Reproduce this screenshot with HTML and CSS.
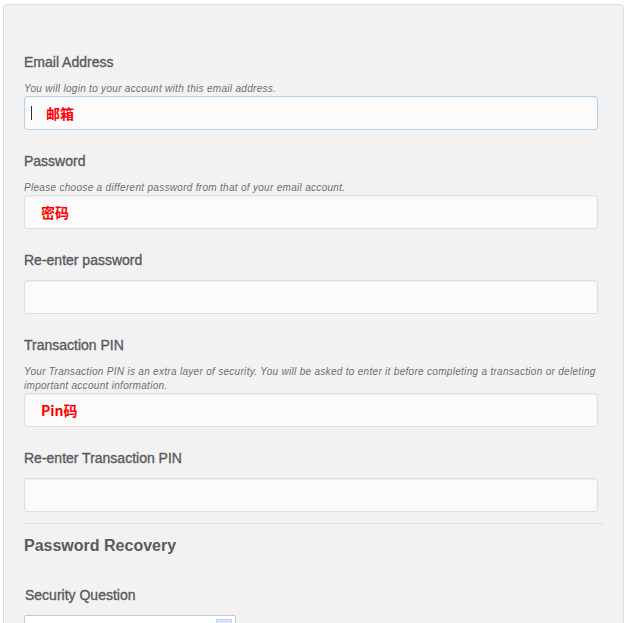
FILE: index.html
```html
<!DOCTYPE html>
<html>
<head>
<meta charset="utf-8">
<link rel="stylesheet" href="styles.css">
</head>
<body>
<div class="panel">
  <div class="group">
    <div class="label">Email Address</div>
    <div class="help">You will login to your account with this email address.</div>
    <div class="input focused"><span class="caret"></span><span class="note note-email">邮箱</span></div>
  </div>
  <div class="group">
    <div class="label">Password</div>
    <div class="help">Please choose a different password from that of your email account.</div>
    <div class="input"><span class="note">密码</span></div>
  </div>
  <div class="group">
    <div class="label">Re-enter password</div>
    <div class="input"></div>
  </div>
  <div class="group">
    <div class="label">Transaction PIN</div>
    <div class="help">Your Transaction PIN is an extra layer of security. You will be asked to enter it before completing a transaction or deleting important account information.</div>
    <div class="input"><span class="note">Pin码</span></div>
  </div>
  <div class="group last">
    <div class="label">Re-enter Transaction PIN</div>
    <div class="input"></div>
  </div>
  <hr class="divider">
  <h3 class="section">Password Recovery</h3>
  <div class="group sq">
    <div class="label">Security Question</div>
    <div class="select"><span class="arrow"></span></div>
  </div>
</div>
</body>
</html>
```
FILE: styles.css
```css
html, body {
  margin: 0;
  padding: 0;
  background: #ffffff;
}
body {
  padding: 4px 4px 0 3px;
  font-family: "Liberation Sans", Arial, sans-serif;
}
.panel {
  background: #f2f2f2;
  border: 1px solid #dcdcdc;
  border-radius: 4px;
  padding: 47px 20px 40px 20px;
  min-height: 700px;
}
.group {
  padding-right: 5px;
  margin-bottom: 21px;
}
.group.last {
  margin-bottom: 11px;
}
.label {
  font-size: 14px;
  line-height: 20px;
  color: #5a5a5a;
  margin-bottom: 10px;
  -webkit-text-stroke: 0.35px #5a5a5a;
}
.help {
  font-size: 10px;
  font-style: italic;
  line-height: 14px;
  letter-spacing: 0.3px;
  color: #6e6e6e;
}
.input {
  height: 32px;
  background: #fbfbfb;
  border: 1px solid #dedede;
  border-radius: 3px;
  box-shadow: inset 0 1px 2px rgba(0,0,0,0.05);
  display: flex;
  align-items: center;
  padding-left: 16px;
}
.input.focused {
  border-color: #b5d3ee;
  padding-left: 6px;
}
.caret {
  width: 1px;
  height: 14px;
  background: #333;
  margin-right: 14px;
}
.note {
  font-family: "Noto Sans CJK SC", sans-serif;
  font-weight: bold;
  font-size: 14px;
  color: #f00;
  line-height: 18px;
}
.divider {
  border: 0;
  border-top: 1px solid #e0e0e0;
  margin: 0 0 12px 0;
}
.section {
  margin: 0 0 29px 0;
  font-size: 16px;
  line-height: 20px;
  font-weight: bold;
  color: #5a5a5a;
}
.sq .label {
  padding-left: 1px;
}
.select {
  position: relative;
  width: 210px;
  height: 24px;
  background: #fff;
  border: 1px solid #c8c8c8;
  border-radius: 2px;
}
.arrow {
  position: absolute;
  right: 3px;
  top: 3px;
  width: 14px;
  height: 16px;
  background: #dbe6f4;
  border: 1px solid #c3d4ea;
}
```
